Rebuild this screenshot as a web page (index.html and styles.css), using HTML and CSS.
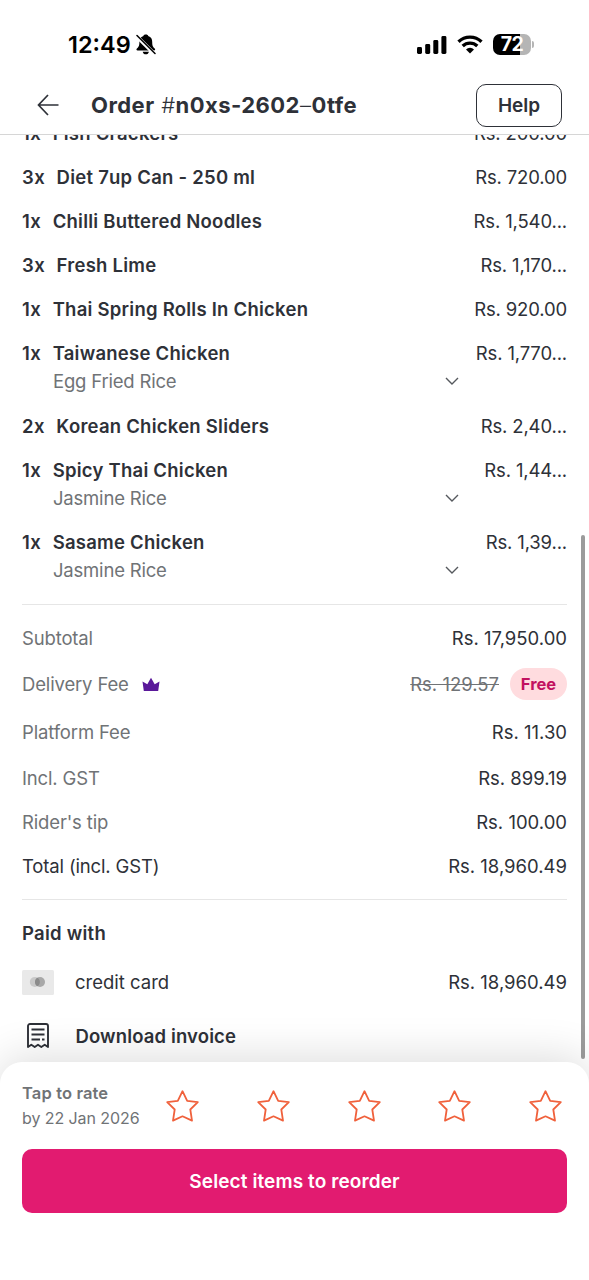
FILE: index.html
```html
<!DOCTYPE html>
<html lang="en">
<head>
<meta charset="utf-8">
<meta name="viewport" content="width=device-width, initial-scale=1">
<title>Order details</title>
<link rel="stylesheet" href="styles.css">
</head>
<body>
<svg width="0" height="0" class="defs" aria-hidden="true">
  <symbol id="chevron" viewBox="0 0 14 8"><path d="M1 1l6 6 6-6" fill="none" stroke="#55585d" stroke-width="1.4"/></symbol>
  <symbol id="star" viewBox="0 0 34 34"><path d="M17.500 2.200L22.200 11.900L32.800 13.200L25.300 20.500L27 31.600L17.500 27.300L8 31.600L9.700 20.500L2.200 13.200L12.800 11.900Z" fill="none" stroke="#f0613c" stroke-width="1.8" stroke-linejoin="round"/></symbol>
</svg>
<div class="screen">
  <div class="status">
    <div class="clock">12:49</div>
    <svg class="bell" width="20" height="21" viewBox="0 0 20 21">
      <path d="M9.800.6C8.300.6 7.600 1.200 7.400 2C4.400 3 3.400 5.200 3.400 8c0 4-.9 5-2.500 6.500-.9.900-.5 2 .7 2h16.400c1.200 0 1.600-1.100.7-2C17.100 13 16.200 12 16.200 8c0-2.800-1-5-4-6C12 1.200 11.300.6 9.800.6zM6.700 17.700h6.200c-.3 1.700-1.500 2.600-3.100 2.600s-2.800-.9-3.100-2.600z"/>
      <path d="M.5 2L18.500 20" stroke="#fff" stroke-width="3.800"/><path d="M1 1.500L19 19.500" stroke="#000" stroke-width="1.500" stroke-linecap="round"/>
    </svg>
    <svg class="signal" width="30" height="19" viewBox="0 0 30 19"><rect x="0" y="12" width="5" height="7" rx="1.400"/><rect x="8.200" y="9" width="5" height="10" rx="1.400"/><rect x="16.300" y="5" width="5" height="14" rx="1.400"/><rect x="24.400" y="1" width="5" height="18" rx="1.400"/></svg>
    <svg class="wifi" width="26" height="19" viewBox="0 0 26 19"><g fill="none" stroke="#000" stroke-width="3.300"><path d="M1.500 6.700a16.500 16.500 0 0 1 23 0"/><path d="M5.700 11a10.500 10.500 0 0 1 14.600 0"/></g><path d="M13 18.600l-4-4.200a5.800 5.800 0 0 1 8 0z"/></svg>
    <div class="battery"><span class="level">72</span></div><i class="cap"></i>
  </div>
  <header class="header">
    <svg class="back" width="22" height="22" viewBox="0 0 22 22"><path d="M11 1L1.500 11L11 21M1.500 11H21.500" fill="none" stroke="#2e3138" stroke-width="1.700"/></svg>
    <h1 class="title">Order <span class="hash">#</span>n0xs-2602<span class="dash">–</span>0tfe</h1>
    <button class="help">Help</button>
  </header>
  <main class="content">
    <ul class="items">
      <li class="item"><b class="qty">1x</b><b class="name">Fish Crackers</b><span class="price">Rs. 200.00</span></li>
      <li class="item"><b class="qty">3x</b><b class="name">Diet 7up Can - 250 ml</b><span class="price">Rs. 720.00</span></li>
      <li class="item"><b class="qty">1x</b><b class="name">Chilli Buttered Noodles</b><span class="price">Rs. 1,540...</span></li>
      <li class="item"><b class="qty">3x</b><b class="name">Fresh Lime</b><span class="price">Rs. 1,170...</span></li>
      <li class="item"><b class="qty">1x</b><b class="name">Thai Spring Rolls In Chicken</b><span class="price">Rs. 920.00</span></li>
      <li class="item"><b class="qty">1x</b><b class="name">Taiwanese Chicken</b><span class="price">Rs. 1,770...</span></li>
      <li class="option"><span>Egg Fried Rice</span><svg class="chevron"><use href="#chevron"/></svg></li>
      <li class="item"><b class="qty">2x</b><b class="name">Korean Chicken Sliders</b><span class="price">Rs. 2,40...</span></li>
      <li class="item"><b class="qty">1x</b><b class="name">Spicy Thai Chicken</b><span class="price">Rs. 1,44...</span></li>
      <li class="option"><span>Jasmine Rice</span><svg class="chevron"><use href="#chevron"/></svg></li>
      <li class="item"><b class="qty">1x</b><b class="name">Sasame Chicken</b><span class="price">Rs. 1,39...</span></li>
      <li class="option"><span>Jasmine Rice</span><svg class="chevron"><use href="#chevron"/></svg></li>
    </ul>
    <section class="summary">
      <div class="line"><span class="label">Subtotal</span><span class="price">Rs. 17,950.00</span></div>
      <div class="line fee"><span class="label">Delivery Fee</span><svg class="crown" width="18" height="15" viewBox="0 0 18 15"><path d="M1.800 14L.5 4.500L5.300 7.300L9 .8L12.700 7.300L17.500 4.500L16.200 14Z" fill="#5a189a"/></svg><s class="price old">Rs. 129.57</s><span class="free">Free</span></div>
      <div class="line platform"><span class="label">Platform Fee</span><span class="price">Rs. 11.30</span></div>
      <div class="line"><span class="label">Incl. GST</span><span class="price">Rs. 899.19</span></div>
      <div class="line"><span class="label">Rider's tip</span><span class="price">Rs. 100.00</span></div>
      <div class="line"><span class="total">Total (incl. GST)</span><span class="price">Rs. 18,960.49</span></div>
    </section>
    <section class="payment">
      <h2 class="heading">Paid with</h2>
      <div class="method"><svg class="card" width="32" height="25" viewBox="0 0 32 25"><rect width="32" height="25" rx="1.500" fill="#e9e9e9"/><circle cx="12.800" cy="12" r="5" fill="#c9c9c9"/><circle cx="18" cy="12" r="5" fill="#a8a8a8"/><path d="M15.400 7.700a5 5 0 0 1 0 8.600a5 5 0 0 1 0-8.600z" fill="#8b8b8b"/></svg><span>credit card</span><span class="price">Rs. 18,960.49</span></div>
      <div class="invoice"><svg width="22" height="26" viewBox="0 0 22 26" fill="none" stroke="#2e3138" stroke-width="1.900"><path d="M1 24V3a2 2 0 0 1 2-2h16a2 2 0 0 1 2 2v21l-3.300-2.200L14.300 24L11 21.800L7.700 24L4.300 21.800Z" stroke-linejoin="round"/><path d="M4.500 6.500h13M4.500 11.500h13M4.500 16.500h8.500M15 16.500h2.500"/></svg><b>Download invoice</b></div>
    </section>
    <i class="scrollbar"></i>
  </main>
  <footer class="sheet">
    <div class="rate">
      <div class="prompt"><b>Tap to rate</b><span class="due">by 22 Jan 2026</span></div>
      <div class="stars"><svg class="star"><use href="#star"/></svg><svg class="star"><use href="#star"/></svg><svg class="star"><use href="#star"/></svg><svg class="star"><use href="#star"/></svg><svg class="star"><use href="#star"/></svg></div>
    </div>
    <button class="reorder">Select items to reorder</button>
  </footer>
</div>
</body>
</html>
```
FILE: styles.css
```css
* { box-sizing: border-box; }
body { margin: 0; background: #fff; color: #2e3138; font-family: Inter, "Liberation Sans", sans-serif; font-size: 18.500px; }
button { font-family: inherit; color: inherit; }
b { font-weight: 600; letter-spacing: 0.130px; }
.defs { position: absolute; }
.screen { width: 589px; height: 1280px; display: flex; flex-direction: column; overflow: hidden; }

.status { height: 77px; padding: 11px 55px 0 68px; display: flex; align-items: center; color: #000; flex: none; }
.clock { font-size: 23.500px; font-weight: 600; letter-spacing: 0; width: 68px; white-space: nowrap; }
.signal { margin-left: auto; margin-right: 10px; }
.wifi { margin-right: 10px; }
.battery { width: 38px; height: 21px; border-radius: 7px; background: linear-gradient(90deg, #000 72%, #b5b5b5 72%); color: #fff; display: flex; align-items: center; justify-content: center; }
.level { font-size: 19.500px; line-height: 21px; font-weight: 700; letter-spacing: -0.500px; }
.cap { width: 2px; height: 7px; margin-left: 1px; background: #b5b5b5; border-radius: 0 3px 3px 0; }

.header { height: 57.500px; flex: none; display: flex; align-items: center; padding: 0 27px 0 37px; border-bottom: 1.500px solid #d6d6d6; }
.title { margin: 0 auto 0 32px; font-size: 22px; font-weight: 700; white-space: nowrap; letter-spacing: 0.450px; }
.hash { font-weight: 300; margin-left: 1px; }
.dash { font-weight: 300; }
.help { width: 86px; height: 43px; padding: 0; border: 1.500px solid #2e3138; border-radius: 10px; background: #fff; font-size: 19px; font-weight: 600; }

.content { height: 927.500px; flex: none; overflow: hidden; padding: 0 22px; position: relative; }
.items { list-style: none; margin: -24px 0 0; padding: 0 0 11.500px; border-bottom: 1.500px solid #e6e6e6; }
.item { height: 44.150px; display: flex; align-items: center; white-space: nowrap; }
.qty { letter-spacing: 0.400px; }
.name { margin-left: 11.500px; letter-spacing: 0.240px; }
.price { margin-left: auto; }
.item .price { letter-spacing: -0.150px; }
.option { height: 28.150px; display: flex; align-items: center; justify-content: space-between; padding: 0 108px 16px 31px; color: #707376; letter-spacing: -0.200px; white-space: nowrap; }
.chevron { width: 14px; height: 8px; }

.summary { padding-top: 11px; height: 295px; border-bottom: 1.500px solid #e6e6e6; }
.line { height: 44px; display: flex; align-items: center; }
.label, .old { color: #707376; }
.label, .total { letter-spacing: -0.150px; }
.fee { height: 49px; }
.crown { margin-left: 13px; }
.free { height: 32px; width: 57px; margin-left: 11px; border-radius: 16px; background: #ffdcdf; color: #c21260; font-size: 16.500px; font-weight: 700; display: flex; align-items: center; justify-content: center; }
.platform { height: 47px; }

.payment { padding-top: 11px; }
.heading { margin: 0; height: 45px; display: flex; align-items: center; font-size: 18.500px; font-weight: 600; letter-spacing: 0.250px; }
.method { height: 53px; display: flex; align-items: center; }
.card { margin-right: 21px; }
.invoice { height: 54px; padding-left: 5px; display: flex; align-items: center; gap: 26.500px; }
.scrollbar { position: absolute; left: 581px; top: 400px; width: 4px; height: 524px; border-radius: 2px; background: #9b9b9b; }

.sheet { position: relative; flex: 1; background: #fff; border-radius: 22px 22px 0 0; padding: 16px 22px 0; box-shadow: 0 -4px 44px rgba(0, 0, 0, 0.140); }
.rate { height: 56px; display: flex; align-items: center; }
.prompt { width: 143px; display: flex; flex-direction: column; font-size: 16.500px; line-height: 25px; color: #707376; white-space: nowrap; }
.due { font-size: 16px; letter-spacing: -0.080px; }
.stars { flex: 1; display: flex; justify-content: space-between; margin-right: 5px; }
.star { width: 34px; height: 34px; }
.reorder { display: block; width: 100%; height: 64px; margin-top: 15px; border: 0; border-radius: 10px; background: #e21b70; color: #fff; font-size: 19px; font-weight: 600; letter-spacing: 0.100px; }
```
